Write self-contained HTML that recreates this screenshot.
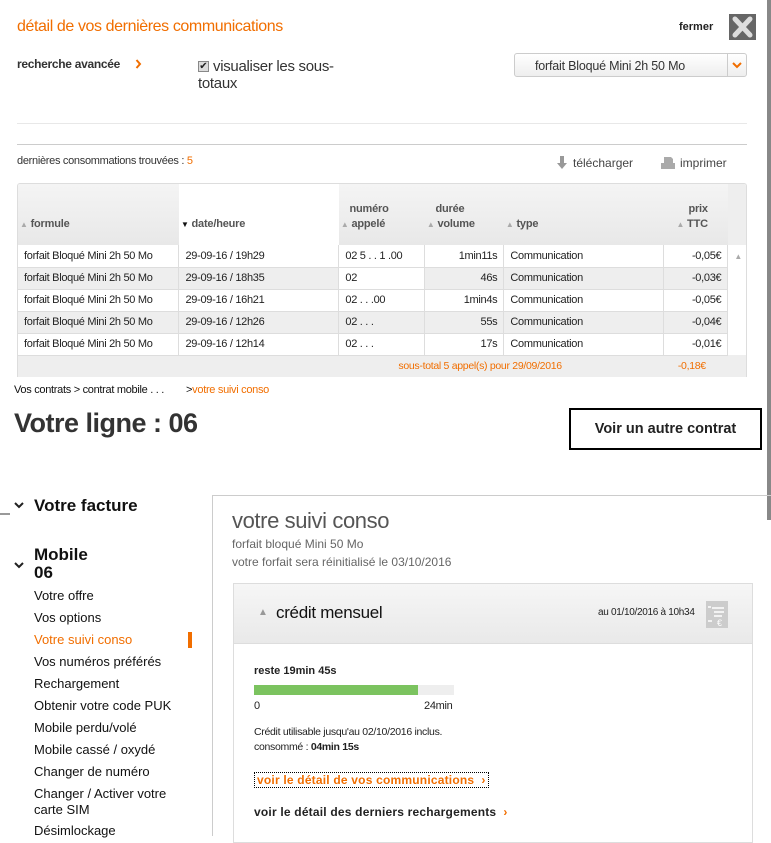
<!DOCTYPE html>
<html><head><meta charset="utf-8"><style>
*{margin:0;padding:0;box-sizing:border-box}
body{width:771px;height:836px;overflow:hidden;background:#fff;font-family:"Liberation Sans",Arial,sans-serif;color:#222;position:relative}
.a{position:absolute;white-space:nowrap}
.n{font-size:11px;letter-spacing:-0.3px}
table{border-collapse:collapse}
.tb{position:absolute;left:17px;top:183px;width:730px;border:1px solid #ddd;border-bottom:none;border-radius:3px 3px 0 0;overflow:hidden}
.tb td{font-size:11px;letter-spacing:-0.3px;height:22px;padding:0 6px;border-right:1px solid #ddd;border-bottom:1px solid #ddd;color:#222}
.tb tr.g td{background:#eee}
.tb th{height:61px;background:linear-gradient(#f4f4f4,#e8e8e8);font-size:11px;font-weight:bold;color:#555;text-align:left;vertical-align:bottom;padding:0 0 13px 2px;line-height:15px;letter-spacing:-0.2px}
.up{color:#aaa;font-size:8px}
.r{text-align:right}
.nav{position:absolute;left:34px;font-size:13px;color:#111}
</style></head><body>
<div style="position:absolute;left:767px;top:0;width:4px;height:520px;background:#888"></div>
<div class="a" style="left:17px;top:18px;font-size:16px;color:#f16e00;letter-spacing:-0.4px">détail de vos dernières communications</div>
<div class="a" style="left:679px;top:21px;font-size:11px;font-weight:bold">fermer</div>
<div class="a" style="left:729px;top:14px;width:27px;height:26px;background:#666"><svg width="27" height="26"><path d="M6 5L21 21M21 5L6 21" stroke="#ddd" stroke-width="5" stroke-linecap="round"/></svg></div>
<div class="a" style="left:17px;top:57px;font-size:12px;font-weight:bold;color:#333;letter-spacing:-0.3px">recherche avancée</div>
<svg class="a" style="left:135px;top:59px" width="7" height="10"><path d="M1.5 1L5 5L1.5 9" stroke="#f16e00" stroke-width="2" fill="none"/></svg>
<div class="a" style="left:198px;top:61px;width:11px;height:11px;border:1px solid #888;background:#ddd;font-size:10px;line-height:9px;text-align:center">✔</div>
<div class="a" style="left:213px;top:58px;font-size:15px;color:#333;letter-spacing:-0.3px;line-height:17px">visualiser les sous-</div>
<div class="a" style="left:198px;top:75px;font-size:15px;color:#333;letter-spacing:-0.3px;line-height:17px">totaux</div>
<div class="a" style="left:514px;top:53px;width:233px;height:24px;border:1px solid #ccc;border-radius:3px;background:linear-gradient(#fff,#eee)"><span class="a" style="left:20px;top:5px;font-size:12.5px;color:#333;letter-spacing:-0.2px">forfait Bloqué Mini 2h 50 Mo</span><div class="a" style="left:212px;top:0;width:1px;height:22px;background:#ccc"></div><svg class="a" style="left:217px;top:7px" width="10" height="8"><path d="M1 2L5 6L9 2" stroke="#f16e00" stroke-width="2" fill="none"/></svg></div>
<div class="a" style="left:17px;top:123px;width:730px;height:1px;background:#e8e8e8"></div>
<div class="a" style="left:17px;top:144px;width:730px;height:1px;background:#ccc"></div>
<div class="a n" style="left:17px;top:155px;color:#333">dernières consommations trouvées : <span style="color:#f16e00">5</span></div>
<svg class="a" style="left:556px;top:156px" width="12" height="14"><path d="M4 0h4v7h3l-5 6-5-6h3z" fill="#999"/></svg>
<div class="a" style="left:573px;top:156px;font-size:12px;color:#444">télécharger</div>
<svg class="a" style="left:661px;top:157px" width="14" height="12"><path d="M3 0h7l2 2v4h2v6H0V6h3z" fill="#aaa"/></svg>
<div class="a" style="left:680px;top:156px;font-size:12px;color:#444">imprimer</div>
<div class="tb">
<table style="width:730px">
<tr><th style="width:161px"><span class="up">▲</span> formule</th><th style="width:160px;background:#fff;border:none"><span style="font-size:8px;color:#111">▼</span> date/heure</th><th style="width:86px">&nbsp;&nbsp;&nbsp;numéro<br><span class="up">▲</span> appelé</th><th style="width:79px">&nbsp;&nbsp;&nbsp;durée<br><span class="up">▲</span> volume</th><th style="width:160px"><span class="up">▲</span> type</th><th style="width:64px;text-align:right;padding-right:20px">prix<br><span class="up">▲</span> TTC</th><th style="width:20px;background:#eee"></th></tr>
<tr><td>forfait Bloqué Mini 2h 50 Mo</td><td>29-09-16 / 19h29</td><td>02 5 . . 1 .00</td><td class="r">1min11s</td><td>Communication</td><td class="r">-0,05€</td><td style="border:none;background:#fff;color:#aaa;font-size:8px">▲</td></tr>
<tr class="g"><td>forfait Bloqué Mini 2h 50 Mo</td><td>29-09-16 / 18h35</td><td style="background:#fff">02</td><td class="r">46s</td><td>Communication</td><td class="r">-0,03€</td><td style="border:none;background:#fff"></td></tr>
<tr><td>forfait Bloqué Mini 2h 50 Mo</td><td>29-09-16 / 16h21</td><td>02 . . .00</td><td class="r">1min4s</td><td>Communication</td><td class="r">-0,05€</td><td style="border:none"></td></tr>
<tr class="g"><td>forfait Bloqué Mini 2h 50 Mo</td><td>29-09-16 / 12h26</td><td>02 . . .</td><td class="r">55s</td><td>Communication</td><td class="r">-0,04€</td><td style="border:none;background:#fff"></td></tr>
<tr><td>forfait Bloqué Mini 2h 50 Mo</td><td>29-09-16 / 12h14</td><td>02 . . .</td><td class="r">17s</td><td>Communication</td><td class="r">-0,01€</td><td style="border:none"></td></tr>
<tr><td colspan="5" style="background:#eee;color:#f16e00;text-align:right;height:16px;border:none;padding-right:102px;font-size:10.5px">sous-total 5 appel(s) pour 29/09/2016</td><td colspan="2" style="background:#eee;color:#f16e00;border:none;padding-left:14px;font-size:10.5px">-0,18€</td></tr>
</table></div>
<div class="a n" style="left:14px;top:384px;color:#111">Vos contrats &gt; contrat mobile . . . &nbsp;&nbsp;&nbsp;&nbsp;&nbsp;&nbsp; &gt;<span style="color:#f16e00">votre suivi conso</span></div>
<div class="a" style="left:14px;top:408px;font-size:27px;font-weight:bold;color:#333;letter-spacing:-0.5px">Votre ligne : 06</div>
<div class="a" style="left:569px;top:408px;width:193px;height:42px;border:2px solid #000;font-size:14.5px;font-weight:bold;text-align:center;line-height:38px">Voir un autre contrat</div>
<div class="a" style="left:0;top:513px;width:10px;height:2px;background:#999"></div>
<svg class="a" style="left:14px;top:502px" width="10" height="7"><path d="M1 1L5 5L9 1" stroke="#222" stroke-width="2" fill="none"/></svg>
<div class="a" style="left:34px;top:496px;font-size:17px;font-weight:bold;color:#111">Votre facture</div>
<svg class="a" style="left:14px;top:562px" width="10" height="7"><path d="M1 1L5 5L9 1" stroke="#222" stroke-width="2" fill="none"/></svg>
<div class="a" style="left:34px;top:546px;font-size:17px;font-weight:bold;color:#111;line-height:18px">Mobile<br>06</div>
<div class="nav" style="top:588px">Votre offre</div>
<div class="nav" style="top:610px">Vos options</div>
<div class="nav" style="top:632px;color:#f16e00">Votre suivi conso</div>
<div class="a" style="left:188px;top:632px;width:4px;height:16px;background:#f16e00"></div>
<div class="nav" style="top:654px">Vos numéros préférés</div>
<div class="nav" style="top:676px">Rechargement</div>
<div class="nav" style="top:698px">Obtenir votre code PUK</div>
<div class="nav" style="top:720px">Mobile perdu/volé</div>
<div class="nav" style="top:742px">Mobile cassé / oxydé</div>
<div class="nav" style="top:764px">Changer de numéro</div>
<div class="nav" style="top:786px;line-height:16px">Changer / Activer votre<br>carte SIM</div>
<div class="nav" style="top:823px">Désimlockage</div>
<div class="a" style="left:212px;top:495px;width:560px;height:341px;border-left:1px solid #ccc;border-top:1px solid #ccc"></div>
<div class="a" style="left:232px;top:508px;font-size:22px;color:#555;letter-spacing:-0.4px">votre suivi conso</div>
<div class="a" style="left:232px;top:537px;font-size:12px;color:#666">forfait bloqué Mini 50 Mo</div>
<div class="a" style="left:232px;top:555px;font-size:12px;color:#666">votre forfait sera réinitialisé le 03/10/2016</div>
<div class="a" style="left:233px;top:583px;width:520px;height:260px;border:1px solid #ddd"></div>
<div class="a" style="left:234px;top:584px;width:518px;height:60px;background:linear-gradient(#f6f6f6,#e9e9e9);border-bottom:1px solid #ddd"></div>
<div class="a" style="left:258px;top:607px;font-size:10px;color:#999">▲</div>
<div class="a" style="left:276px;top:603px;font-size:17px;color:#111;letter-spacing:-0.3px">crédit mensuel</div>
<div class="a n" style="left:598px;top:607px;font-size:10px;color:#222">au 01/10/2016 à 10h34</div>
<div class="a" style="left:706px;top:601px;width:22px;height:27px;background:#ccc"><svg width="22" height="27"><path d="M6 7h12M8 11h10M8 15h8M2 6h3M2 20h4" stroke="#fff" stroke-width="1.5"/><text x="11" y="25" font-size="9" fill="#fff" font-family="Liberation Sans">€</text></svg></div>
<div class="a" style="left:254px;top:665px;font-size:11px;font-weight:bold;color:#222">reste 19min 45s</div>
<div class="a" style="left:254px;top:685px;width:200px;height:10px;background:#eee"><div style="width:164px;height:10px;background:#7bc35f"></div></div>
<div class="a" style="left:254px;top:700px;font-size:11px;color:#222">0</div>
<div class="a n" style="left:424px;top:700px;color:#222">24min</div>
<div class="a n" style="left:254px;top:726px;color:#222;font-size:10.5px">Crédit utilisable jusqu'au 02/10/2016 inclus.</div>
<div class="a n" style="left:254px;top:741px;color:#222;font-size:10.5px">consommé : <b>04min 15s</b></div>
<div class="a" style="left:254px;top:772px;font-size:12px;font-weight:bold;color:#f16e00;border:1px dotted #000;padding:0 2px;letter-spacing:0.2px">voir le détail de vos communications &nbsp;›</div>
<div class="a" style="left:254px;top:805px;font-size:12px;font-weight:bold;color:#222;letter-spacing:0.2px">voir le détail des derniers rechargements &nbsp;<span style="color:#f16e00">›</span></div>
</body></html>
